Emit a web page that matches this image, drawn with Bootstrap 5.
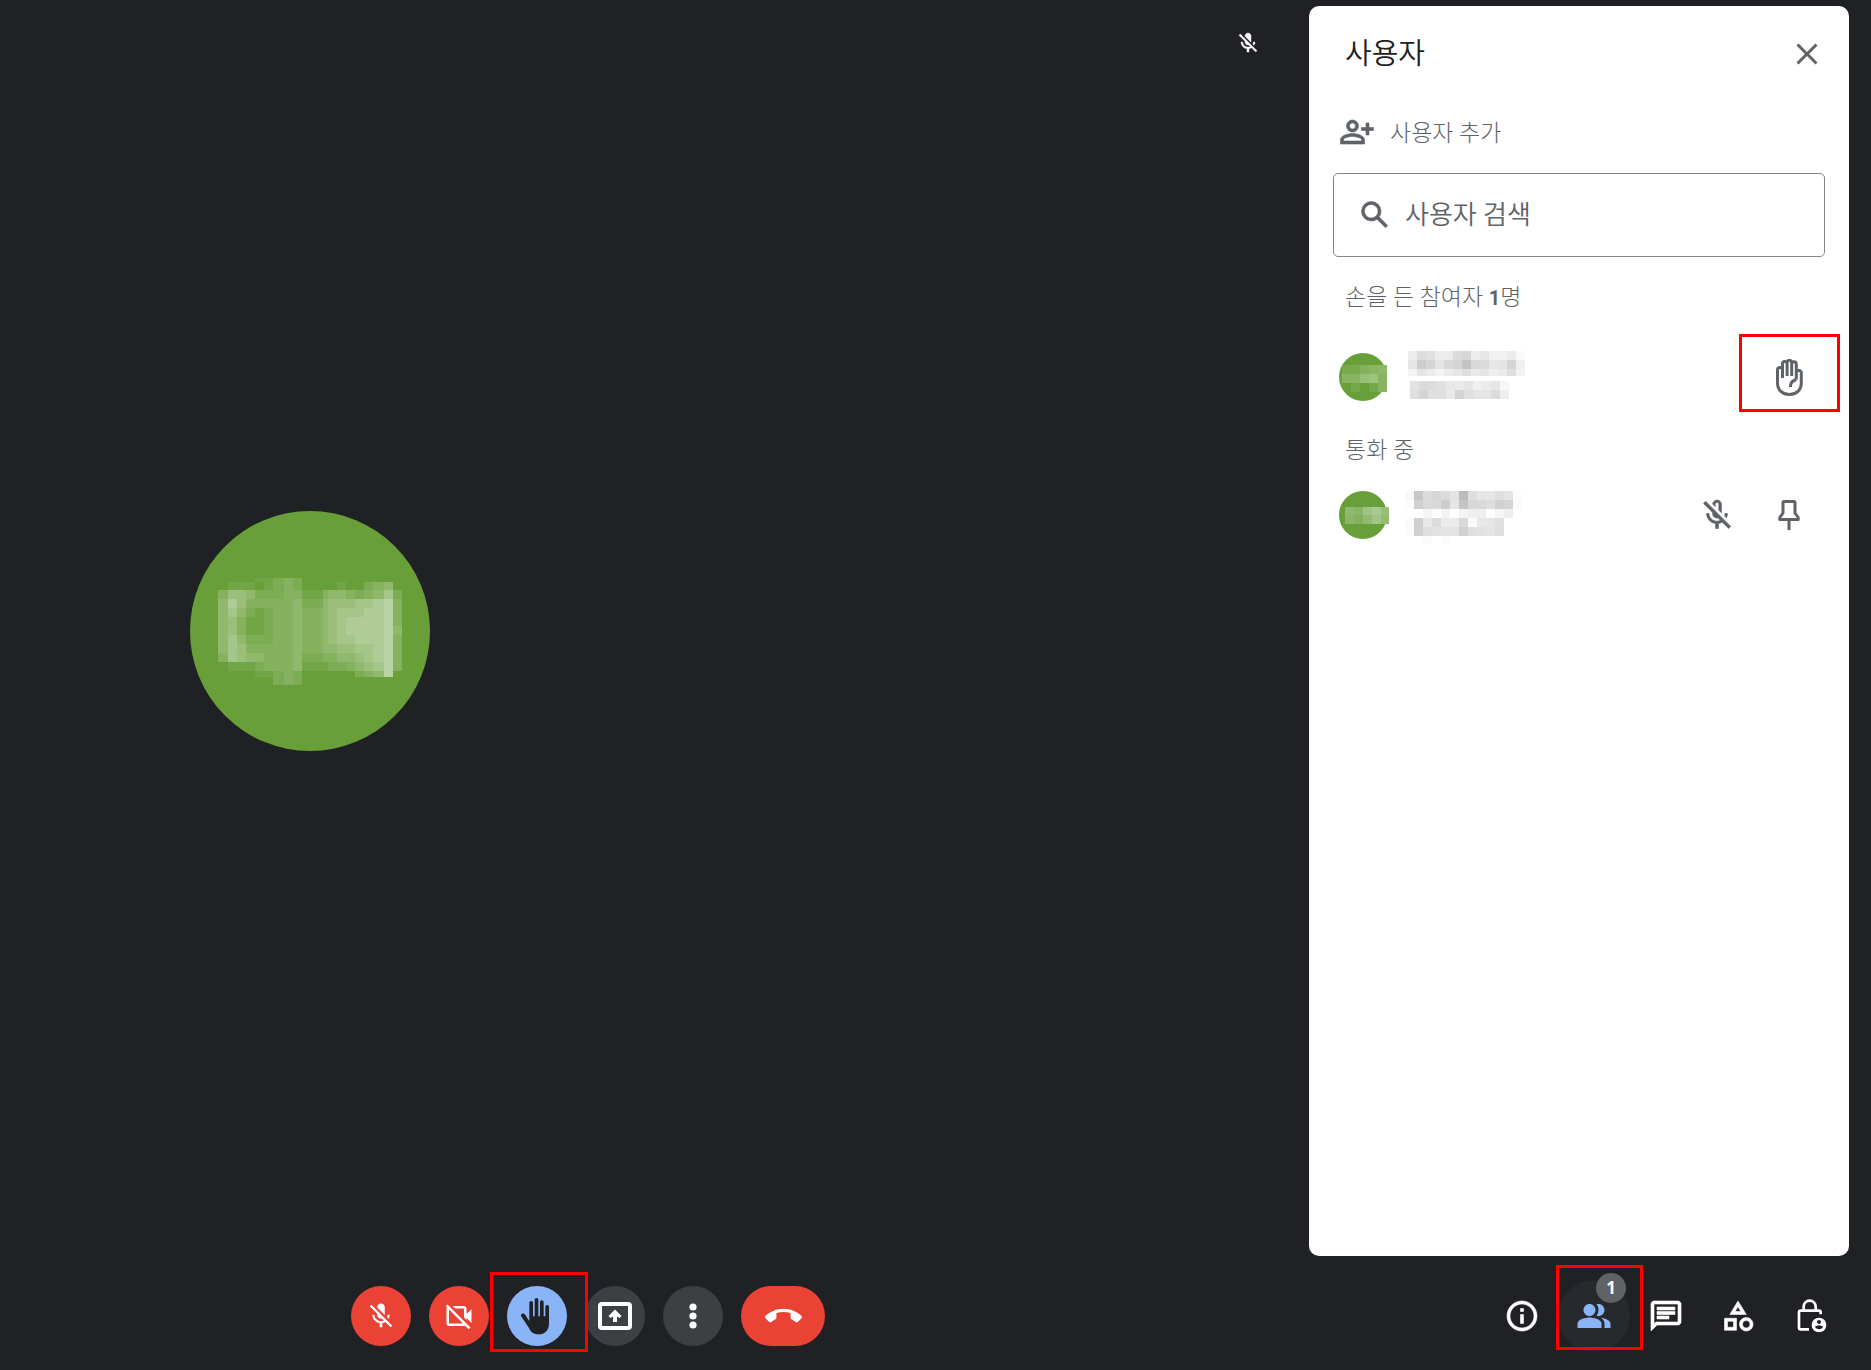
<!DOCTYPE html>
<html lang="ko">
<head>
<meta charset="utf-8">
<meta name="viewport" content="width=device-width, initial-scale=1">
<title>사용자</title>
<link href="https://cdn.jsdelivr.net/npm/bootstrap@5.3.0/dist/css/bootstrap.min.css" rel="stylesheet">
<style>
  body { background: #202124; font-family: Roboto, "Noto Sans CJK KR", sans-serif; color: #5f6368; }
  svg { display: block; fill: currentColor; flex: none; }
  .ico { width: 36px; height: 36px; }
  .ico-md { width: 30px; height: 30px; }
  .ico-sm { width: 24px; height: 24px; }
  .line { fill: none; stroke: currentColor; stroke-width: 3; stroke-linejoin: round; }
  .heavy { stroke: currentColor; stroke-width: .4; }

  .meeting { padding: 6px 22px 0 0; }
  .stage { padding: 25px 49px 25px 190px; color: #fff; }
  .face-lg { width: 240px; height: 240px; }

  .people { width: 540px; border-radius: 10px; font-weight: 350; }
  .people-head { padding: 26px 24px 0 36px; height: 90px; }
  .people-title { font-size: 29px; line-height: 44px; font-weight: 350; color: #202124; }
  .plain { border: 0; background: none; color: inherit; padding: 0; display: flex; align-items: center; justify-content: center; position: relative; }
  .close-btn { margin-top: 4px; }
  .add-row { margin: 16px 0 0 30px; height: 40px; gap: 15px; font-size: 23px; font-weight: 300; }
  .add-row span { line-height: 36px; padding-top: 4px; }
  .search { margin: 21px 24px 0; height: 84px; border: 1px solid #80868b; border-radius: 5px; padding: 0 23px; gap: 12px; }
  .search input { border: 0; outline: 0; background: none; font-size: 26px; font-weight: 350; padding: 0; min-width: 0; color: #5f6368; }
  .search input::placeholder { color: #5f6368; opacity: 1; }
  .group-label { font-size: 23px; line-height: 32px; font-weight: 300; margin: 25px 0 0; padding-left: 36px; }
  .group-label b { font-size: 20px; font-weight: 700; }
  .person { height: 72px; margin-top: 27px; padding: 0 24px 0 30px; }
  .person + .group-label { margin-top: 22px; }
  .group-label + .person ~ .person { margin-top: 12px; }
  .face { width: 52px; height: 48px; }
  .name-blur { width: 130px; height: 60px; margin-left: 14px; }
  .act { width: 72px; height: 72px; }

  .bar { height: 114px; padding: 6px 25px 0 351px; color: #fff; }
  .controls { gap: 18px; }
  .ctl { width: 60px; height: 60px; border-radius: 30px; background: #3c4043; color: #fff; }
  .ctl-red { background: #ea4335; }
  .ctl-on { background: #8ab4f8; color: #202124; padding-right: 4px; }
  .ctl-end { width: 84px; }
  .tab-on { background: #28292c; border-radius: 50%; color: #8ab4f8; }
  .count { position: absolute; left: 38px; top: -7px; width: 30px; height: 30px; border-radius: 50%; background: #5f6368; color: #fff; font: 700 17px/30px "Open Sans", sans-serif; }
  .hl { position: absolute; border: 3px solid #f00; pointer-events: none; z-index: 2; }
  .hl-raise { left: -17px; top: -14px; width: 98px; height: 80px; }
  .hl-hand { left: -14px; top: -7px; width: 101px; height: 78px; }
  .hl-people { left: -2px; top: -15px; width: 87px; height: 85px; }
</style>
<script src="https://cdn.jsdelivr.net/npm/bootstrap@5.3.0/dist/js/bootstrap.bundle.min.js"></script>
</head>
<body class="d-flex flex-column vh-100 overflow-hidden">

<main class="meeting d-flex flex-grow-1">
  <section class="stage flex-grow-1 d-flex justify-content-between">
    <svg class="face-lg align-self-center" viewBox="60 62 720 720" role="img" aria-label="참여자">
      <circle cx="420" cy="422" r="360" fill="#689f38"/>
      <g id="mosaic" shape-rendering="crispEdges" fill="#fff"></g>
    </svg>
    <svg class="ico-sm heavy" viewBox="0 0 24 24"><use href="#micoff"/></svg>
  </section>

  <aside class="people bg-white">
    <div class="people-head d-flex justify-content-between align-items-start">
      <h1 class="people-title m-0">사용자</h1>
      <button class="plain ico close-btn" type="button" aria-label="닫기">
        <svg class="ico" viewBox="0 0 24 24"><path d="M19 6.410L17.590 5 12 10.590 6.410 5 5 6.410 10.590 12 5 17.590 6.410 19 12 13.410 17.590 19 19 17.590 13.410 12z"/></svg>
      </button>
    </div>

    <button class="plain add-row" type="button">
      <svg class="ico heavy" viewBox="0 0 24 24"><path d="M9 12c2.210 0 4-1.790 4-4s-1.790-4-4-4-4 1.790-4 4 1.790 4 4 4zm0-6c1.100 0 2 .9 2 2s-.9 2-2 2-2-.9-2-2 .9-2 2-2zm0 7c-2.670 0-8 1.340-8 4v3h16v-3c0-2.660-5.330-4-8-4zm6 5H3v-1c0-.8 3.100-2 6-2s6 1.200 6 2v1zM20 9V6h-2v3h-3v2h3v3h2v-3h3V9z"/></svg>
      <span>사용자 추가</span>
    </button>

    <label class="search d-flex align-items-center">
      <svg class="ico heavy" viewBox="0 0 24 24"><path d="M20.490 19l-5.730-5.730C15.530 12.200 16 10.910 16 9.500A6.500 6.500 0 1 0 9.500 16c1.410 0 2.700-.470 3.770-1.240L19 20.490 20.490 19zM5 9.500C5 7.010 7.010 5 9.500 5S14 7.010 14 9.500 11.990 14 9.500 14 5 11.990 5 9.500z"/></svg>
      <input class="flex-grow-1" type="text" placeholder="사용자 검색" aria-label="사용자 검색">
    </label>

    <h2 class="group-label">손을 든 참여자 <b>1</b>명</h2>
    <div class="person d-flex align-items-center">
      <svg class="face" viewBox="0 0 52 48"><circle cx="24" cy="24" r="24" fill="#689f38"/><g data-mosaic="a" shape-rendering="crispEdges"></g></svg>
      <svg class="name-blur" viewBox="0 0 130 60" shape-rendering="crispEdges" data-names="a"></svg>
      <button class="plain act ms-auto" type="button" aria-label="손 내리기">
        <svg width="27" height="37" viewBox="0 0 27 37" class="line"><path d="M1.500 24V11a2.500 2.500 0 0 1 5 0v8M6.500 12V4.800a2.300 2.300 0 0 1 4.600 0V17M11.100 4.500V3.600a2.300 2.300 0 0 1 4.600 0V17M15.700 5a2.300 2.300 0 0 1 4.600 0v15.500M20.300 13.500a2.500 2.500 0 0 1 5 1V24c0 7-5 11.500-11.900 11.500S1.500 31 1.500 24M14.500 28c-.4-5 2.500-6.500 5.800-7.500"/></svg>
        <span class="hl hl-hand"></span>
      </button>
    </div>

    <h2 class="group-label">통화 중</h2>
    <div class="person d-flex align-items-center">
      <svg class="face" viewBox="0 0 52 48"><circle cx="24" cy="24" r="24" fill="#689f38"/><g data-mosaic="b" shape-rendering="crispEdges"></g></svg>
      <svg class="name-blur" viewBox="0 0 130 60" shape-rendering="crispEdges" data-names="b"></svg>
      <button class="plain act ms-auto" type="button" aria-label="음소거됨">
        <svg class="ico heavy" viewBox="0 0 24 24"><path d="M10.800 4.900c0-.66.54-1.200 1.200-1.200s1.200.54 1.200 1.200l-.01 3.910L15 10.600V5c0-1.660-1.340-3-3-3-1.540 0-2.790 1.160-2.960 2.650l1.760 1.760V4.900zM19 11h-1.700c0 .58-.1 1.130-.27 1.640l1.270 1.270c.44-.88.7-1.870.7-2.910zM4.410 2.860L3 4.270l6 6V11c0 1.660 1.340 3 3 3 .23 0 .44-.03.65-.08l1.660 1.660c-.71.33-1.500.52-2.310.52-2.760 0-5.300-2.100-5.300-5.100H5c0 3.410 2.720 6.230 6 6.720V21h2v-3.280c.91-.13 1.770-.45 2.550-.9l4.200 4.200 1.410-1.410L4.410 2.860z"/></svg>
      </button>
      <button class="plain act" type="button" aria-label="고정">
        <svg width="22" height="30" viewBox="0 0 22 30" class="line"><path d="M6 1.500h10q1 0 1 1V13l3.200 4.500v2H1.800v-2L5 13V2.500q0-1 1-1zM11 20v10"/></svg>
      </button>
    </div>
  </aside>
</main>

<footer class="bar d-flex justify-content-between align-items-center flex-shrink-0">
  <div class="controls d-flex">
    <button class="plain ctl ctl-red" type="button" aria-label="마이크 켜기">
      <svg class="ico-md" viewBox="0 0 24 24"><path id="micoff" d="M19 11h-1.700c0 .74-.16 1.430-.43 2.050l1.230 1.230c.56-.98.9-2.090.9-3.280zm-4.020.17c0-.06.02-.11.02-.17V5c0-1.660-1.340-3-3-3S9 3.340 9 5v.18l5.980 5.990zM4.270 3L3 4.270l6.010 6.010V11c0 1.660 1.330 3 2.990 3 .22 0 .44-.03.65-.08l1.660 1.660c-.71.33-1.500.52-2.310.52-2.760 0-5.300-2.100-5.300-5.100H5c0 3.410 2.720 6.230 6 6.720V21h2v-3.280c.91-.13 1.770-.45 2.540-.9L19.730 21 21 19.730 4.270 3z"/></svg>
    </button>
    <button class="plain ctl ctl-red" type="button" aria-label="카메라 켜기">
      <svg class="ico-md" viewBox="0 0 24 24"><path d="M18 10.480V6c0-1.100-.9-2-2-2H6.830l2 2H16v7.170l2 2v-1.650l4 3.980v-11l-4 3.980zM16 16L6 6 4 4 2.810 2.810 1.390 4.220l.85.85C2.090 5.350 2 5.660 2 6v12c0 1.100.9 2 2 2h12c.34 0 .65-.09.93-.24l2.850 2.850 1.410-1.410L18 18l-2-2zM4 18V6.830L15.170 18H4z"/></svg>
    </button>
    <button class="plain ctl ctl-on" type="button" aria-label="손 내리기">
      <svg width="30" height="38" viewBox="0 0 90 114"><path d="M28 70V17.500a5.500 5.500 0 0 1 11 0V58h5V8.500a5.500 5.500 0 0 1 11 0V58h5V15.500a5.500 5.500 0 0 1 11 0V58h5V29.500a5.500 5.500 0 0 1 11 0V80c0 19-13 32-31 32-14 0-24-6-29-19L3.500 58c-2-5 1-9 6-8.500 3 .3 5 2 7 5L27 71z"/></svg>
      <span class="hl hl-raise"></span>
    </button>
    <button class="plain ctl" type="button" aria-label="발표 시작">
      <svg width="34" height="28" viewBox="0 0 34 28"><rect x="2" y="2" width="30" height="24" rx="2" fill="none" stroke="currentColor" stroke-width="4"/><path d="M17 7.500l6.500 6.500-2 2L19 14.500V20h-4v-5.500L12.500 16l-2-2z"/></svg>
    </button>
    <button class="plain ctl" type="button" aria-label="옵션 더보기">
      <svg width="8" height="26" viewBox="0 0 8 26"><circle cx="4" cy="4" r="3.600"/><circle cx="4" cy="13" r="3.600"/><circle cx="4" cy="22" r="3.600"/></svg>
    </button>
    <button class="plain ctl ctl-red ctl-end" type="button" aria-label="통화에서 나가기">
      <svg width="37" height="37" viewBox="0 0 24 24"><path d="M12 9c-1.600 0-3.150.25-4.600.72v3.100c0 .39-.23.74-.56.9-.98.49-1.870 1.120-2.660 1.850-.18.18-.43.28-.7.28-.28 0-.53-.11-.71-.29L.29 13.080c-.18-.17-.29-.42-.29-.7 0-.28.11-.53.29-.71C3.340 8.780 7.460 7 12 7s8.660 1.780 11.710 4.670c.18.18.29.43.29.71 0 .28-.11.53-.29.71l-2.480 2.480c-.18.18-.43.29-.71.29-.27 0-.52-.11-.7-.28-.79-.74-1.690-1.360-2.670-1.850-.33-.16-.56-.5-.56-.9v-3.100C15.150 9.250 13.600 9 12 9z"/></svg>
    </button>
  </div>

  <nav class="d-flex">
    <button class="plain act" type="button" aria-label="회의 세부정보">
      <svg class="ico heavy" viewBox="0 0 24 24"><path d="M11 7h2v2h-2zm0 4h2v6h-2zm1-9C6.480 2 2 6.480 2 12s4.480 10 10 10 10-4.480 10-10S17.520 2 12 2zm0 18c-4.410 0-8-3.590-8-8s3.590-8 8-8 8 3.590 8 8-3.590 8-8 8z"/></svg>
    </button>
    <button class="plain act tab-on" type="button" aria-label="모두에게 표시">
      <svg class="ico" viewBox="0 0 24 24"><path d="M15 8c0-1.420-.5-2.730-1.330-3.760.42-.14.86-.24 1.330-.24 2.210 0 4 1.790 4 4s-1.790 4-4 4c-.43 0-.84-.09-1.230-.21l-.1-.03A5.980 5.980 0 0 0 15 8zm1.660 5.130C18.030 14.060 19 15.320 19 17v3h4v-3c0-2.180-3.580-3.470-6.340-3.870zM9 4c2.210 0 4 1.790 4 4s-1.790 4-4 4-4-1.790-4-4 1.790-4 4-4zm0 9c-2.670 0-8 1.340-8 4v3h16v-3c0-2.660-5.330-4-8-4z"/></svg>
      <span class="count">1</span>
      <span class="hl hl-people"></span>
    </button>
    <button class="plain act" type="button" aria-label="채팅">
      <svg class="ico heavy" viewBox="0 0 24 24"><path d="M4 4h16v12H5.170L4 17.170V4m0-2c-1.100 0-1.990.9-1.990 2L2 22l4-4h14c1.100 0 2-.9 2-2V4c0-1.100-.9-2-2-2H4zm2 10h8v2H6v-2zm0-3h12v2H6V9zm0-3h12v2H6V6z"/></svg>
    </button>
    <button class="plain act" type="button" aria-label="활동">
      <svg class="ico heavy" viewBox="0 0 24 24"><path d="M12 2l-5.500 9h11L12 2zm0 3.840L13.930 9h-3.870L12 5.840zM17.500 13c-2.490 0-4.500 2.010-4.500 4.500s2.010 4.500 4.500 4.500 4.500-2.010 4.500-4.500-2.010-4.500-4.500-4.500zm0 7c-1.380 0-2.500-1.120-2.500-2.500s1.120-2.500 2.500-2.500 2.500 1.120 2.500 2.500-1.120 2.500-2.500 2.500zM3 21.500h8v-8H3v8zm2-6h4v4H5v-4z"/></svg>
    </button>
    <button class="plain act" type="button" aria-label="주최자 제어">
      <svg width="34" height="34" viewBox="-12 0 102 102"><path fill="none" stroke="currentColor" stroke-width="8" d="M71 46V40q0-5-5-5H11q-5 0-5 5V86q0 5 5 5H36M20 35V23a18 18 0 0 1 36 0V35"/><circle cx="66" cy="78" r="22"/><circle cx="66" cy="69" r="6" fill="#202124"/><path fill="#202124" d="M53 83q13-9 26 0q-13 15-26 0z"/></svg>
    </button>
  </nav>
</footer>

<script>
const NS = 'http://www.w3.org/2000/svg';
function cell(parent, x, y, w, h, fill, opacity) {
  const r = document.createElementNS(NS, 'rect');
  Object.entries({x, y, width: w, height: h, fill, 'fill-opacity': opacity}).forEach(([k, v]) => r.setAttribute(k, v));
  parent.appendChild(r);
}
/* Pixelated initials: one digit per cell, 0 = clear, 9 = lightest */
const xs = [144,174,201,228,255,282,309,342,369,396,432,459,474,501,528,555,582,609,642,669,696];
const ys = [262,274,298,327,354,381,408,435,462,489,516,543,560,584];
const rows = [
  '00001123200000000000',
  '01110123200001002340',
  '35542223311344323462',
  '47533333422455566783',
  '46421233433456667783',
  '45311233433456777783',
  '45311233433456777784',
  '46422233433456677783',
  '46533333433445566783',
  '36544333422334456783',
  '01112333411122345683',
  '00001123200000023480',
  '00000023200000000000'
];
const big = document.getElementById('mosaic');
rows.forEach((row, j) => [...row].forEach((d, i) => {
  if (d !== '0') cell(big, xs[i], ys[j], xs[i + 1] - xs[i], ys[j + 1] - ys[j], '#fff', d * 0.068);
}));
const small = {
  a: [[3, 12, ['#78a94d','#78a94d','#84b15d','#8ab563','#8fb86b']], [3, 21, ['#89b463','#89b463','#97bf75','#9dc37e','#88b363']], [12, 30, ['#76a84a','#689f38','#76a84a','#88b363']]],
  b: [[6, 16, ['#8fb970','#8ab566','#9fc384','#abca93','#96bf77']], [6, 24, ['#8ab466','#84b15d','#92bb71','#a0c584','#93bc72']]]
};
document.querySelectorAll('[data-mosaic]').forEach(g => small[g.dataset.mosaic].forEach(([x, y, cols]) =>
  cols.forEach((c, i) => cell(g, x + 9 * i, y, Math.min(9, 50 - x - 9 * i), 9, c, 1))));
/* Pixelated names: [x, y, height, grey levels in hex pairs] */
const names = {
  a: [[3,4,9,'ecdde1ecebdbd6ede7f2f1ebf9'],[3,13,9,'e6cdd5e5d8d4c3d9dae6e4d4ef'],[3,22,7,'f4e5ecf4ebe6dfe9e5eeebdff2'],[5,34,9,'e3dbdde1e8eae5f0ebe7f7'],[5,43,9,'dfd4e0dfe9d4dfe4e5dbee']],
  b: [[0,6,9,'f8c7dbd7dbe3bbdee6e7dfe4fc'],[0,15,9,'fcd0dad9cde5c4d8d9ddd1d4fb'],[0,24,9,'fffff4fff4fff4f0eefff5ee'],[0,33,9,'fad0e8dbebebdafae8e6e1'],[0,42,9,'fbd0dfe1e4e3d0dfe2e4de'],[18,51,8,'fbfffb']]
};
document.querySelectorAll('[data-names]').forEach(s => names[s.dataset.names].forEach(([x, y, h, t]) =>
  t.match(/../g).forEach((v, i) => cell(s, x + 9 * i, y, 9, h, '#' + v + v + v, 1))));
</script>
</body>
</html>
